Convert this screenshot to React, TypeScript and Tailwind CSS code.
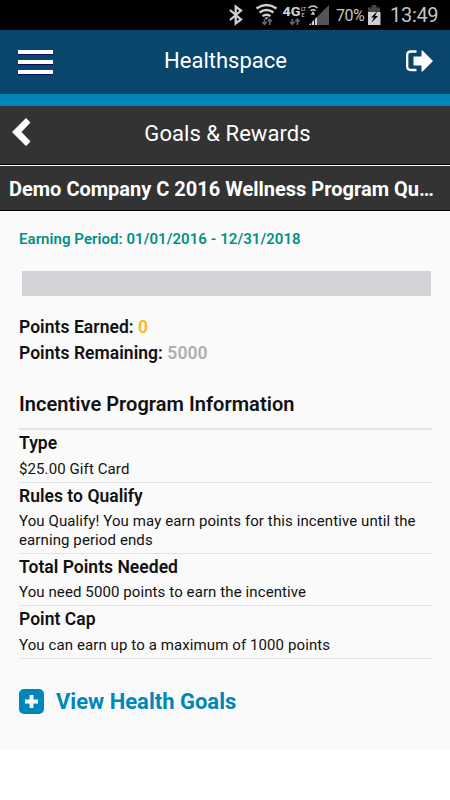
const details = [
  { label: "Type", text: "$25.00 Gift Card" },
  {
    label: "Rules to Qualify",
    text: "You Qualify! You may earn points for this incentive until the earning period ends",
  },
  { label: "Total Points Needed", text: "You need 5000 points to earn the incentive" },
  { label: "Point Cap", text: "You can earn up to a maximum of 1000 points" },
];

function StatusBar() {
  return (
    <div className="flex h-[30px] items-center bg-black pl-[228px] text-[#c4c4c4]">
      <svg width="108" height="30" viewBox="228 0 108 30" fill="none" className="shrink-0">
        {/* Bluetooth */}
        <path d="M230 10l11 9.500-5.300 4V6.500l5.300 4-11 9.500" stroke="#cfcfcf" strokeWidth="2.300" />
        {/* Wifi */}
        <g stroke="#cfcfcf" strokeWidth="2.300">
          <path d="M256.500 8.500q10-7 20 0" />
          <path d="M259.500 12.500q7-5 14 0" />
          <path d="M262.500 16.200q4-3 8 0" />
        </g>
        <path d="M264.300 17.500h4.400l-2.200 2z" fill="#cfcfcf" />
        <g stroke="#666" strokeWidth="1.700">
          <path d="M264.500 19v5M262.300 22l2.200 2.200 2.200-2.200M269.800 25v-5.500M267.600 21.500l2.200-2.200 2.200 2.200" />
          <path d="M292.300 19v5M290.100 22l2.200 2.200 2.200-2.200M297.500 25v-5.500M295.300 21.500l2.200-2.200 2.200 2.200" />
        </g>
        <text x="282.500" y="16" fill="#cfcfcf" fontSize="13" fontWeight="800" textLength="18" lengthAdjust="spacingAndGlyphs" className="font-[Roboto]">4G</text>
        <text x="301" y="10.500" fill="#aaa" fontSize="5" fontWeight="700" textLength="5" lengthAdjust="spacingAndGlyphs" className="font-[Roboto]">LT</text>
        <text x="301.500" y="16.500" fill="#aaa" fontSize="5" fontWeight="700" className="font-[Roboto]">E</text>
        {/* Signal strength */}
        <path d="M329 5v20h-20z" fill="#555" />
        <path d="M317 17v8h-8z" fill="#cfcfcf" />
        <path d="M311.500 20v5M314.500 17v8" stroke="#000" strokeWidth=".8" />
        <path d="M308.500 8q4.500-4 9 0M310.500 10.800q2.500-2.200 5 0" stroke="#cfcfcf" strokeWidth="1.400" />
        <path d="M313 11l2.200 3.800h-4.400z" fill="#cfcfcf" />
      </svg>
      <span className="w-[28px] text-[16px] leading-[31px] tracking-[-0.500px]">70%</span>
      <svg width="14" height="22" viewBox="0 0 14 22" className="ml-[2.500px] shrink-0">
        <path d="M4.500 1h5v2.500H13V9H1V3.500h3.500z" fill="#444" />
        <path d="M1 8h12.500v13H1z" fill="#cfcfcf" />
        <path d="M10.500 7L4 13.500h3L4.500 18.500l6.500-6.500H8z" fill="#000" />
      </svg>
      <span className="ml-[9.500px] text-[20px] leading-[32px] tracking-[-0.300px]">13:49</span>
    </div>
  );
}

function Header() {
  return (
    <header className="flex h-[76px] items-start justify-between border-b-[12px] border-[#0087ba] bg-[#0a456b] pr-[17px] pl-[18px]">
      <button aria-label="Menu" className="mt-5 flex w-[35px] flex-col gap-[6px]">
        <span className="h-1 bg-white shadow-[0_1px_0_#06105a]" />
        <span className="h-1 bg-white shadow-[0_1px_0_#06105a]" />
        <span className="h-1 bg-white shadow-[0_1px_0_#06105a]" />
      </button>
      <h1 className="mr-[7px] text-[22px] leading-[61px]">Healthspace</h1>
      <button aria-label="Log out" className="mt-[19px]">
        <svg width="28" height="24" viewBox="0 0 28 24">
          <path d="M11.500 2.500H6Q2.200 2.500 2.200 6v11.500Q2.200 21 6 21h5.500" fill="none" stroke="#fff" strokeWidth="2.300" />
          <path d="M8.500 7.500h8V1.500h1L28 12 17.500 22.500h-1v-6h-8z" fill="#fff" />
        </svg>
      </button>
    </header>
  );
}

export default function App() {
  return (
    <div className="h-[800px] w-[450px] overflow-hidden bg-white font-[Roboto,sans-serif] text-[#111]">
      <StatusBar />
      <div className="text-white">
        <Header />
        <div className="flex h-[59px] items-start border-b border-black bg-[#333] pl-[12px]">
          <button aria-label="Back" className="mt-[12px]">
            <svg width="19" height="28" viewBox="0 0 19 28">
              <path d="M14 0l4.500 4.500L9.500 14l9 9.500L14 28 0 14z" fill="#fff" />
            </svg>
          </button>
          <h2 className="flex-1 pr-[26px] text-center text-[22px] leading-[56px] tracking-[0.050px]">Goals &amp; Rewards</h2>
        </div>
        <h3 className="h-[46px] border-t border-b border-t-white border-b-black bg-[#333] pl-[9px] text-[20px] leading-[46px] font-bold whitespace-nowrap">
          Demo Company C 2016 Wellness Program Qu…
        </h3>
      </div>

      <main className="h-[539px] bg-[#fafafa] pr-[18px] pl-[19px]">
        <p className="pt-[17px] text-[15px] leading-[22px] font-semibold tracking-[0.060px] text-[#009184]">
          Earning Period: 01/01/2016 - 12/31/2018
        </p>
        <div className="mt-[21px] mr-[1px] ml-[3px] h-[25px] bg-[#d2d3d7]" />

        <div className="mt-[18px] text-[17.500px] leading-[26px] font-semibold tracking-[0.050px]">
          <p>Points Earned: <span className="text-[#fcb813]">0</span></p>
          <p>Points Remaining: <span className="text-[#afafaf]">5000</span></p>
        </div>

        <h4 className="mt-[25px] h-[39px] border-b-2 border-[#e5e5e5] text-[20px] leading-[27px] font-semibold tracking-[0.040px]">
          Incentive Program Information
        </h4>
        <dl>
          {details.map((item) => (
            <div key={item.label} className="border-b border-[#e3e3e3] pb-[3.500px]">
              <dt className="text-[17.500px] leading-[26.500px] font-semibold tracking-[0.030px]">{item.label}</dt>
              <dd className="pt-[3px] text-[15px] leading-[18.500px] tracking-[0.100px]">{item.text}</dd>
            </div>
          ))}
        </dl>

        <a href="#" className="mt-[29px] flex items-center gap-[12px] text-[22px] leading-[27px] font-bold text-[#0087ba]">
          <svg width="25" height="25" viewBox="0 0 25 25">
            <rect width="25" height="25" rx="5" fill="#0087ba" />
            <path d="M12.500 6v13M6 12.500h13" stroke="#fff" strokeWidth="3.800" />
          </svg>
          View Health Goals
        </a>
      </main>
    </div>
  );
}
